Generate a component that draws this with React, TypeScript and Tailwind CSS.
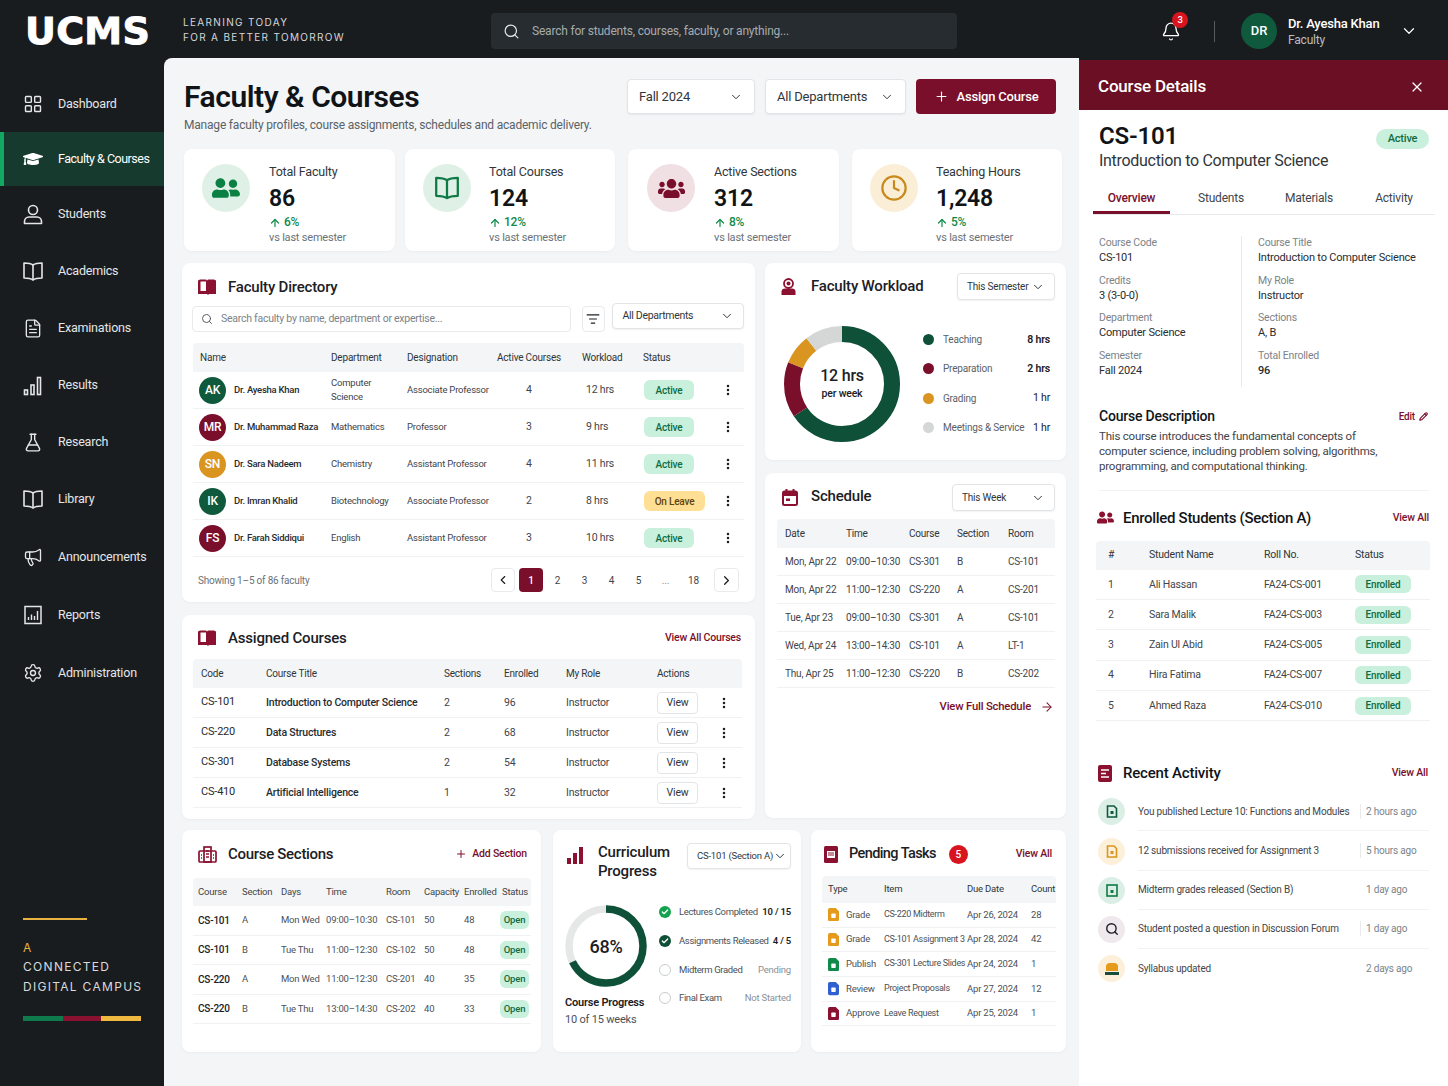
import { ArrowRight, ArrowUp, Bell, Check, ChevronDown, ChevronLeft, ChevronRight, Clock, EllipsisVertical, FileText, FlaskConical, LayoutGrid, ListFilter, Megaphone, Pencil, Plus, Search, Settings, X } from 'lucide-react';
import { FaGraduationCap, FaUserFriends, FaUsers } from 'react-icons/fa';
import type { ReactNode } from 'react';

const BarsOutline = () => (
  <svg width="20" height="20" viewBox="0 0 20 20" fill="none" stroke="currentColor" strokeWidth="1.6">
    <rect x="1.5" y="14" width="3" height="4.5" />
    <rect x="8" y="9" width="3" height="9.5" />
    <rect x="14.5" y="1.5" width="3" height="17" />
  </svg>
);

const ReportIcon = () => (
  <svg width="20" height="20" viewBox="0 0 20 20" fill="none" stroke="currentColor" strokeWidth="1.5">
    <rect x="2" y="1.5" width="16" height="17" />
    <path d="M6 15v-3M9 15V9.5M12 15v-4M15 15V6" strokeWidth="1.4" transform="translate(-.5 0)" />
  </svg>
);

const BookOutline = ({ size = 21, width = 1.6 }: { size?: number; width?: number }) => (
  <svg width={size} height={size} viewBox="0 0 20 20" fill="none" stroke="currentColor" strokeWidth={width} strokeLinejoin="round">
    <path d="M10 3.500C8 2 5 1.500 1 1.500V16.500C5 16.500 8 17 10 18.500C12 17 15 16.500 19 16.500V1.500C15 1.500 12 2 10 3.500Z" />
    <path d="M10 3.500V18.500" />
  </svg>
);

const StudentIcon = () => (
  <svg width="20" height="21" viewBox="0 0 20 21" fill="none" stroke="currentColor" strokeWidth="1.6" strokeLinejoin="round">
    <circle cx="10" cy="6" r="4.500" />
    <path d="M1.500 19.500V17.500C1.500 15 3.500 13 6 13H14C16.500 13 18.500 15 18.500 17.500V19.500Z" />
  </svg>
);

const navItems = [
  { label: 'Dashboard', icon: <LayoutGrid size={22} strokeWidth={1.7} />, h: 'h-[56px]' },
  { label: 'Faculty & Courses', icon: <FaGraduationCap size={22} />, h: 'h-[54px]', active: true },
  { label: 'Students', icon: <StudentIcon />, h: 'h-[57px]' },
  { label: 'Academics', icon: <BookOutline />, h: 'h-[57px]' },
  { label: 'Examinations', icon: <FileText size={21} strokeWidth={1.6} />, h: 'h-[57px]' },
  { label: 'Results', icon: <BarsOutline />, h: 'h-[57px]' },
  { label: 'Research', icon: <FlaskConical size={21} strokeWidth={1.7} />, h: 'h-[57px]' },
  { label: 'Library', icon: <BookOutline />, h: 'h-[57px]' },
  { label: 'Announcements', icon: <Megaphone size={22} strokeWidth={1.6} />, h: 'h-[58px]' },
  { label: 'Reports', icon: <ReportIcon />, h: 'h-[58px]' },
  { label: 'Administration', icon: <Settings size={22} strokeWidth={1.6} />, h: 'h-[58px]' },
];

const stats = [
  { label: 'Total Faculty', value: '86', delta: '6%', box: 'w-[211px] pl-[18px] gap-[19px]', bg: 'bg-[#dff1e7]', icon: <FaUserFriends size={28} className="text-[#0b8043]" /> },
  { label: 'Total Courses', value: '124', delta: '12%', box: 'w-[210px] pl-[18px] gap-[18px]', bg: 'bg-[#dff1e7]', icon: <span className="text-[#0f7a45]"><BookOutline size={24} width={1.9} /></span> },
  { label: 'Active Sections', value: '312', delta: '8%', box: 'w-[211px] pl-[19px] gap-[19px]', bg: 'bg-[#f0dfe3]', icon: <FaUsers size={27} className="text-[#7a0f2b]" /> },
  { label: 'Teaching Hours', value: '1,248', delta: '5%', box: 'w-[210px] pl-[18px] gap-[18px]', bg: 'bg-[#fbeed6]', icon: <Clock size={28} strokeWidth={1.9} className="text-[#c98a1b]" /> },
];

const faculty = [
  { initials: 'AK', color: 'bg-[#0f5a3c]', name: 'Dr. Ayesha Khan', dept: 'Computer Science', title: 'Associate Professor', courses: 4, load: '12 hrs', status: 'Active' },
  { initials: 'MR', color: 'bg-[#7a0f2b]', name: 'Dr. Muhammad Raza', dept: 'Mathematics', title: 'Professor', courses: 3, load: '9 hrs', status: 'Active' },
  { initials: 'SN', color: 'bg-[#d9951f]', name: 'Dr. Sara Nadeem', dept: 'Chemistry', title: 'Assistant Professor', courses: 4, load: '11 hrs', status: 'Active' },
  { initials: 'IK', color: 'bg-[#0f5a3c]', name: 'Dr. Imran Khalid', dept: 'Biotechnology', title: 'Associate Professor', courses: 2, load: '8 hrs', status: 'On Leave' },
  { initials: 'FS', color: 'bg-[#7a0f2b]', name: 'Dr. Farah Siddiqui', dept: 'English', title: 'Assistant Professor', courses: 3, load: '10 hrs', status: 'Active' },
];

const assigned = [
  ['CS-101', 'Introduction to Computer Science', '2', '96'],
  ['CS-220', 'Data Structures', '2', '68'],
  ['CS-301', 'Database Systems', '2', '54'],
  ['CS-410', 'Artificial Intelligence', '1', '32'],
];

const schedule = [
  ['Mon, Apr 22', '09:00–10:30', 'CS-301', 'B', 'CS-101'],
  ['Mon, Apr 22', '11:00–12:30', 'CS-220', 'A', 'CS-201'],
  ['Tue, Apr 23', '09:00–10:30', 'CS-301', 'A', 'CS-101'],
  ['Wed, Apr 24', '13:00–14:30', 'CS-101', 'A', 'LT-1'],
  ['Thu, Apr 25', '11:00–12:30', 'CS-220', 'B', 'CS-202'],
];

const sections = [
  ['CS-101', 'A', 'Mon Wed', '09:00–10:30', 'CS-101', '50', '48'],
  ['CS-101', 'B', 'Tue Thu', '11:00–12:30', 'CS-102', '50', '48'],
  ['CS-220', 'A', 'Mon Wed', '11:00–12:30', 'CS-201', '40', '35'],
  ['CS-220', 'B', 'Tue Thu', '13:00–14:30', 'CS-202', '40', '33'],
];

const tasks = [
  { type: 'Grade', item: 'CS-220 Midterm', due: 'Apr 26, 2024', count: '28', color: '#e59a1c' },
  { type: 'Grade', item: 'CS-101 Assignment 3', due: 'Apr 28, 2024', count: '42', color: '#e59a1c' },
  { type: 'Publish', item: 'CS-301 Lecture Slides', due: 'Apr 24, 2024', count: '1', color: '#0f8a4b' },
  { type: 'Review', item: 'Project Proposals', due: 'Apr 27, 2024', count: '12', color: '#2f5fd0' },
  { type: 'Approve', item: 'Leave Request', due: 'Apr 25, 2024', count: '1', color: '#8a1230' },
];

const students = [
  ['1', 'Ali Hassan', 'FA24-CS-001'],
  ['2', 'Sara Malik', 'FA24-CS-003'],
  ['3', 'Zain Ul Abid', 'FA24-CS-005'],
  ['4', 'Hira Fatima', 'FA24-CS-007'],
  ['5', 'Ahmed Raza', 'FA24-CS-010'],
];

const activity = [
  { text: 'You published Lecture 10: Functions and Modules', time: '2 hours ago', bg: 'bg-[#dcefe6]', icon: <DocOutline color="#0f5a3c" />, rule: true },
  { text: '12 submissions received for Assignment 3', time: '5 hours ago', bg: 'bg-[#fdf0da]', icon: <DocOutline color="#d9951f" />, rule: true },
  { text: 'Midterm grades released (Section B)', time: '1 day ago', bg: 'bg-[#dcefe6]', icon: <DocOutline color="#0f7a45" square />, rule: false },
  { text: 'Student posted a question in Discussion Forum', time: '1 day ago', bg: 'bg-[#efe8ec]', icon: <Search size={14} strokeWidth={2.4} className="text-[#1c2024]" />, rule: true },
  { text: 'Syllabus updated', time: '2 days ago', bg: 'bg-[#fdf0da]', icon: <SyllabusIcon />, rule: false },
];

function DocOutline({ color, square }: { color: string; square?: boolean }) {
  return (
    <svg width="12" height="13" viewBox="0 0 12 13" fill="none" stroke={color} strokeWidth="1.6">
      {square ? <rect x="1" y="1" width="10" height="11" /> : <path d="M1.5 1H8l2.500 2.500V12h-9z" />}
      <rect x="4.5" y="6" width="3" height="3" fill={color} strokeWidth="0" />
    </svg>
  );
}

function SyllabusIcon() {
  return (
    <svg width="14" height="12" viewBox="0 0 14 12">
      <path d="M1 8V3.500C1 1.500 2.500 0 4.500 0h5C11.500 0 13 1.500 13 3.500V8z" fill="#e59a1c" />
      <rect x="0" y="9" width="14" height="3" fill="#174d3a" />
    </svg>
  );
}

const DocIcon = ({ color, size = 12 }: { color: string; size?: number }) => (
  <svg width={size} height={size * 1.2} viewBox="0 0 10 12">
    <path d="M1.5 0H7l3 3v7.500A1.500 1.500 0 0 1 8.500 12h-7A1.500 1.500 0 0 1 0 10.500v-9A1.500 1.500 0 0 1 1.500 0z" fill={color} />
    <rect x="3" y="5" width="4" height="4" rx="0.6" fill="#fff" />
  </svg>
);

const BookSolid = () => (
  <svg width="18" height="16" viewBox="0 0 18 16">
    <path d="M0 1.500 2 .5h6l1 1 1-1h6l2 1V15h-7l-1 1-1-1H0z" fill="#8a1230" />
    <path d="M2.500 2.500H8V12H2.500z" fill="#fff" />
  </svg>
);

const Section = ({ children, className }: { children: ReactNode; className: string }) => (
  <section className={`rounded-lg bg-white shadow-[0_1px_3px_rgba(16,24,40,0.04)] ${className}`}>{children}</section>
);

const Select = ({ label, className }: { label: string; className: string }) => (
  <div className={`flex items-center justify-between whitespace-nowrap rounded border border-[#e2e5e8] bg-white text-[#30363b] shadow-[0_1px_2px_rgba(16,24,40,0.06)] ${className}`}>
    <span>{label}</span>
    <ChevronDown size={14} strokeWidth={1.7} className="shrink-0" />
  </div>
);

const Badge = ({ label, className }: { label: string; className: string }) => (
  <span className={`flex items-center justify-center font-medium ${label === 'On Leave' ? 'bg-[#ffdf94] text-[#5f430d]' : 'bg-[#c9f0dc] text-[#0f6b43]'} ${className}`}>{label}</span>
);

const App = () => {
  return (
    <div className="flex h-[1086px] w-[1448px] flex-col overflow-hidden bg-[#191c1f] font-['Roboto','Noto_Sans',sans-serif] tracking-[-0.2px] text-[#1c2024]">
      <header className="flex h-[58px] shrink-0 items-center pt-[4px] text-white">
        <div className="w-[183px] pl-[25px] font-['DejaVu_Sans',sans-serif] text-[38px] font-bold leading-none tracking-[0.3px] [-webkit-text-stroke:1px_white]">UCMS</div>
        <div className="mb-[2px] w-[308px] font-['Inter',sans-serif] text-[10px] leading-[15px] tracking-[1.33px] text-[#d4d7d9]">
          <div>LEARNING TODAY</div>
          <div>FOR A BETTER TOMORROW</div>
        </div>
        <div className="flex h-[36px] w-[466px] items-center gap-[12px] rounded bg-[#272c30] pl-[12px] text-[12px] text-[#a6abae]">
          <Search size={17} strokeWidth={1.7} className="text-[#e6e8e9]" />
          <span>Search for students, courses, faculty, or anything...</span>
        </div>
        <div className="relative ml-[204px] flex h-[36px] w-[20px] items-center">
          <Bell size={21} strokeWidth={1.6} />
          <span className="absolute -top-[1px] left-[11px] flex h-[16px] w-[16px] items-center justify-center rounded-full bg-[#d8151f] text-[9.5px] font-medium">3</span>
        </div>
        <div className="ml-[33px] h-[21px] w-px bg-[#565b5f]" />
        <div className="ml-[26px] flex h-[36px] w-[36px] items-center justify-center rounded-full bg-[#0f5a3c] text-[13px] font-medium">DR</div>
        <div className="ml-[11px] mt-[1px] w-[112px] leading-[17px]">
          <div className="text-[13px] font-medium">Dr. Ayesha Khan</div>
          <div className="text-[12px] text-[#b9bdc0]">Faculty</div>
        </div>
        <ChevronDown size={18} strokeWidth={1.6} />
      </header>

      <div className="flex min-h-0 flex-1">
        <aside className="flex w-[164px] shrink-0 flex-col pt-[18px] text-white">
          <nav>
            {navItems.map((item) => (
              <div key={item.label} className={`flex items-center gap-[15px] text-[12.5px] ${item.h} ${item.active ? 'border-l-[4px] border-[#12a862] bg-[#173a2e] pl-[19px] tracking-[-0.5px]' : 'pl-[23px] text-[#e4e6e7]'}`}>
                <span className="flex w-[20px] items-center justify-center">{item.icon}</span>
                <span>{item.label}</span>
              </div>
            ))}
          </nav>
          <div className="mt-auto pb-[65px] pl-[23px]">
            <div className="h-[2px] w-[64px] bg-[#e8b23e]" />
            <div className="mt-[18px] font-['Inter',sans-serif] text-[12px] leading-[19.5px] tracking-[1.3px] text-[#d8dadb]">
              <div className="text-[#e8b23e]">A</div>
              <div>CONNECTED</div>
              <div>DIGITAL CAMPUS</div>
            </div>
            <div className="mt-[20px] flex h-[5px] w-[118px]">
              <div className="w-[40px] bg-[#0f7a4c]" />
              <div className="w-[38px] bg-[#8a1230]" />
              <div className="w-[40px] bg-[#efb93f]" />
            </div>
          </div>
        </aside>

        <main className="w-[915px] shrink-0 rounded-tl-lg bg-[#f3f5f7] pl-[18px] pt-[21px]">
          <div className="flex h-[70px] pl-[2px]">
            <div className="w-[443px]">
              <h1 className="whitespace-nowrap text-[30px] font-semibold leading-[36px] tracking-[-0.45px] text-[#111417]">Faculty &amp; Courses</h1>
              <p className="mt-[2px] whitespace-nowrap text-[12px] leading-[16px] text-[#5b6268]">Manage faculty profiles, course assignments, schedules and academic delivery.</p>
            </div>
            <Select label="Fall 2024" className="h-[35px] w-[128px] px-[11px] text-[13px]" />
            <Select label="All Departments" className="ml-[10px] h-[35px] w-[141px] px-[11px] text-[13px]" />
            <button className="ml-[10px] flex h-[35px] w-[140px] items-center justify-center gap-[8px] rounded bg-[#7a0f2b] text-[13px] font-medium text-white">
              <Plus size={15} strokeWidth={1.8} />
              Assign Course
            </button>
          </div>

          <div className="ml-[2px] grid w-[878px] grid-cols-[221px_223px_224px_210px]">
            {stats.map((s) => (
              <Section key={s.label} className={`flex h-[102px] pt-[15px] ${s.box}`}>
                <div className={`flex h-[48px] w-[48px] items-center justify-center rounded-full ${s.bg}`}>{s.icon}</div>
                <div>
                  <div className="text-[12.5px] leading-[16px] text-[#30363b]">{s.label}</div>
                  <div className="mt-[4px] text-[23px] font-semibold leading-[29px] text-[#111417]">{s.value}</div>
                  <div className="mt-[2px] flex items-center gap-[3px] text-[12px] font-medium leading-[15px] text-[#0d8a4a]">
                    <ArrowUp size={12} strokeWidth={2.4} />
                    {s.delta}
                  </div>
                  <div className="mt-[1px] text-[11px] leading-[14px] text-[#6b7277]">vs last semester</div>
                </div>
              </Section>
            ))}
          </div>

          <div className="mt-[12px] grid w-[884px] grid-cols-[573px_301px] gap-[10px]">
            <div className="flex flex-col gap-[13px]">
              <Section className="h-[339px] px-[11px] pt-[12px]">
                <div className="flex h-[24px] items-center gap-[12px] pl-[5px]">
                  <BookSolid />
                  <h2 className="text-[15px] font-medium">Faculty Directory</h2>
                </div>
                <div className="mt-[4px] flex h-[29px] items-start">
                  <div className="mt-[3px] flex h-[26px] w-[380px] -translate-x-px items-center gap-[8px] rounded border border-[#e8eaec] pl-[8px] text-[10.5px] tracking-[-0.25px] text-[#7c8388]">
                    <Search size={12} strokeWidth={1.7} className="text-[#3f454a]" />
                    Search faculty by name, department or expertise...
                  </div>
                  <div className="ml-[10px] mt-[3px] flex h-[26px] w-[24px] items-center justify-center rounded border border-[#e8eaec]">
                    <ListFilter size={14} strokeWidth={2} />
                  </div>
                  <Select label="All Departments" className="ml-[7px] h-[26px] w-[132px] px-[9px] text-[10.5px] tracking-[-0.3px]" />
                </div>
                <div className="mt-[11px] grid h-[29px] grid-cols-[138px_76px_90px_85px_61px_70px_31px] items-center rounded-t bg-[#f3f5f6] text-[10px] text-[#30363b]">
                  <span className="pl-[7px]">Name</span>
                  <span>Department</span>
                  <span>Designation</span>
                  <span>Active Courses</span>
                  <span>Workload</span>
                  <span>Status</span>
                </div>
                {faculty.map((f) => (
                  <div key={f.initials} className="grid h-[37px] grid-cols-[138px_76px_90px_85px_61px_70px_31px] items-center border-b border-[#eff1f2] text-[9.5px] text-[#3f454a]">
                    <div className="flex items-center gap-[8px] pl-[6px]">
                      <span className={`flex h-[27px] w-[27px] shrink-0 items-center justify-center rounded-full text-[12px] font-medium text-white ${f.color}`}>{f.initials}</span>
                      <span className="whitespace-nowrap font-medium tracking-[-0.25px] text-[#272c30]">{f.name}</span>
                    </div>
                    <span className="pr-[12px] leading-[14px]">{f.dept}</span>
                    <span className="whitespace-nowrap">{f.title}</span>
                    <span className="pl-[29px] text-[10.5px]">{f.courses}</span>
                    <span className="pl-[4px] text-[10.5px]">{f.load}</span>
                    <Badge label={f.status} className={`h-[20px] rounded-md text-[10px] ${f.status === 'Active' ? 'ml-px w-[50px]' : 'ml-px w-[61px]'}`} />
                    <EllipsisVertical size={14} strokeWidth={2.4} className="ml-[8px] text-[#1c2024]" />
                  </div>
                ))}
                <div className="mt-[11px] flex h-[24px] items-center pl-[5px] text-[10px]">
                  <span className="w-[293px] text-[#6b7277]">Showing 1–5 of 86 faculty</span>
                  <span className="flex h-[24px] w-[24px] items-center justify-center rounded border border-[#e8eaec]"><ChevronLeft size={14} /></span>
                  <span className="ml-[4px] flex h-[24px] w-[24px] items-center justify-center rounded bg-[#7a0f2b] font-medium text-white">1</span>
                  <div className="ml-[1px] flex items-center text-center text-[#3f454a]">
                    <span className="w-[27px]">2</span>
                    <span className="w-[27px]">3</span>
                    <span className="w-[27px]">4</span>
                    <span className="w-[27px]">5</span>
                    <span className="w-[27px] text-[#8a9095]">...</span>
                    <span className="w-[29px]">18</span>
                  </div>
                  <span className="ml-[6px] flex h-[24px] w-[25px] items-center justify-center rounded border border-[#e8eaec]"><ChevronRight size={15} strokeWidth={2} /></span>
                </div>
              </Section>

              <Section className="h-[204px] px-[11px] pt-[11px]">
                <div className="flex h-[24px] items-center gap-[12px] pl-[5px]">
                  <BookSolid />
                  <h2 className="flex-1 text-[15px] font-medium">Assigned Courses</h2>
                  <span className="pr-[3px] text-[10.5px] font-medium text-[#7a0f2b]">View All Courses</span>
                </div>
                <div className="mt-[9px] grid h-[29px] w-[549px] grid-cols-[73px_178px_60px_62px_91px_56px_29px] items-center rounded-t bg-[#f3f5f6] text-[10px] text-[#30363b]">
                  <span className="pl-[8px]">Code</span>
                  <span>Course Title</span>
                  <span>Sections</span>
                  <span>Enrolled</span>
                  <span>My Role</span>
                  <span>Actions</span>
                </div>
                {assigned.map((c) => (
                  <div key={c[0]} className="grid h-[30px] w-[549px] grid-cols-[73px_178px_60px_62px_91px_56px_29px] items-center border-b border-[#eff1f2] text-[10.5px] text-[#3f454a]">
                    <span className="pl-[8px] text-[11px] text-[#272c30]">{c[0]}</span>
                    <span className="whitespace-nowrap font-medium text-[#272c30]">{c[1]}</span>
                    <span>{c[2]}</span>
                    <span>{c[3]}</span>
                    <span>Instructor</span>
                    <span className="flex h-[22px] w-[41px] items-center justify-center rounded border border-[#e2e5e8] text-[#30363b]">View</span>
                    <EllipsisVertical size={14} strokeWidth={2.4} className="ml-[4px] text-[#1c2024]" />
                  </div>
                ))}
              </Section>
            </div>

            <div className="flex flex-col gap-[13px]">
              <Section className="h-[197px] pt-[10px]">
                <div className="flex h-[27px] items-center pl-[16px] pr-[11px]">
                  <svg width="15" height="18" viewBox="0 0 15 18" fill="none" className="mr-[15px]">
                    <circle cx="7.5" cy="5.5" r="4.5" stroke="#8a1230" strokeWidth="1.8" />
                    <circle cx="7.5" cy="5.5" r="2" fill="#8a1230" />
                    <path d="M0.5 17v-3.500C.5 11.500 2 10.500 4 10.500h7c2 0 3.500 1 3.500 3V17z" fill="#8a1230" />
                  </svg>
                  <h2 className="flex-1 text-[15px] font-medium">Faculty Workload</h2>
                  <Select label="This Semester" className="h-[27px] w-[98px] px-[9px] text-[10px]" />
                </div>
                <div className="mt-[25px] flex items-center pl-[19px]">
                  <div className="relative h-[116px] w-[116px]">
                    <svg width="116" height="116" viewBox="0 0 116 116" className="-rotate-90" fill="none" strokeWidth="16">
                      <circle cx="58" cy="58" r="50" pathLength="100" stroke="#0f5138" strokeDasharray="65.6 100" />
                      <circle cx="58" cy="58" r="50" pathLength="100" stroke="#7a0f2b" strokeDasharray="15.5 100" strokeDashoffset="-65.6" />
                      <circle cx="58" cy="58" r="50" pathLength="100" stroke="#d9951f" strokeDasharray="8.4 100" strokeDashoffset="-81.1" />
                      <circle cx="58" cy="58" r="50" pathLength="100" stroke="#d5d6d6" strokeDasharray="10.5 100" strokeDashoffset="-89.5" />
                    </svg>
                    <div className="absolute inset-0 flex flex-col items-center justify-center text-[#1c2024]">
                      <span className="text-[16px] font-medium leading-[20px]">12 hrs</span>
                      <span className="text-[10.5px] font-medium leading-[16px]">per week</span>
                    </div>
                  </div>
                  <div className="ml-[23px] w-[127px] text-[10px]">
                    {[
                      ['Teaching', '8 hrs', 'bg-[#0f5138]', 'font-semibold'],
                      ['Preparation', '2 hrs', 'bg-[#7a0f2b]', 'font-semibold'],
                      ['Grading', '1 hr', 'bg-[#d9951f]', ''],
                      ['Meetings & Service', '1 hr', 'bg-[#d5d6d6]', ''],
                    ].map((l) => (
                      <div key={l[0]} className="flex h-[29.3px] items-center">
                        <span className={`h-[11px] w-[11px] rounded-full ${l[2]}`} />
                        <span className="ml-[9px] flex-1 whitespace-nowrap text-[#5b6268]">{l[0]}</span>
                        <span className={`text-[10.5px] text-[#1c2024] ${l[3]}`}>{l[1]}</span>
                      </div>
                    ))}
                  </div>
                </div>
              </Section>

              <Section className="h-[345px] pl-[12px] pr-[11px] pt-[11px]">
                <div className="flex h-[27px] items-center pl-[5px]">
                  <svg width="16" height="17" viewBox="0 0 16 17" className="mr-[13px]" fill="none">
                    <rect x="1" y="2.5" width="14" height="13.5" rx="1.5" stroke="#8a1230" strokeWidth="2" />
                    <path d="M1 3h14v4H1z" fill="#8a1230" />
                    <path d="M4.500 0v3M11.500 0v3" stroke="#8a1230" strokeWidth="2" />
                    <rect x="4" y="9.5" width="4" height="2.5" fill="#8a1230" />
                  </svg>
                  <h2 className="-mt-[2px] flex-1 text-[15px] font-medium">Schedule</h2>
                  <Select label="This Week" className="h-[27px] w-[103px] px-[9px] text-[10px]" />
                </div>
                <div className="mt-[8px] grid h-[29px] grid-cols-[69px_63px_48px_51px_47px] items-center rounded-t bg-[#f3f5f6] text-[10px] text-[#30363b]">
                  <span className="pl-[8px]">Date</span>
                  <span>Time</span>
                  <span>Course</span>
                  <span>Section</span>
                  <span>Room</span>
                </div>
                {schedule.map((r) => (
                  <div key={r[0] + r[1]} className="grid h-[28px] grid-cols-[69px_63px_48px_51px_47px] items-center whitespace-nowrap border-b border-[#eff1f2] text-[10px] text-[#3f454a]">
                    <span className="pl-[8px]">{r[0]}</span>
                    <span>{r[1]}</span>
                    <span>{r[2]}</span>
                    <span>{r[3]}</span>
                    <span>{r[4]}</span>
                  </div>
                ))}
                <div className="mt-[9px] flex h-[20px] items-center justify-end gap-[9px] pr-[1px] text-[11.3px] font-medium text-[#7a0f2b]">
                  View Full Schedule
                  <ArrowRight size={14} strokeWidth={1.8} />
                </div>
              </Section>
            </div>
          </div>

          <div className="mt-[11px] grid w-[884px] grid-cols-[371px_258px_255px]">
            <Section className="h-[222px] w-[359px] px-[11px] pt-[12px]">
              <div className="flex h-[24px] items-center pl-[5px]">
                <svg width="19" height="17" viewBox="0 0 19 17" fill="none" stroke="#8a1230" strokeWidth="1.7" className="mr-[11px]">
                  <rect x="1" y="5" width="17" height="11" rx="1" />
                  <rect x="6" y="1" width="7" height="15" />
                  <path d="M8 5h3M8 8h3M8 11h3M3 9h1M15 9h1M3 12h1M15 12h1" />
                </svg>
                <h2 className="flex-1 text-[15px] font-medium tracking-[-0.3px]">Course Sections</h2>
                <span className="flex items-center gap-[5px] pr-[3px] text-[10.5px] font-medium text-[#7a0f2b]"><Plus size={12} strokeWidth={2} />Add Section</span>
              </div>
              <div className="mt-[12px] grid h-[28px] w-[338px] grid-cols-[49px_39px_45px_60px_38px_40px_38px_29px] items-center whitespace-nowrap rounded-t bg-[#f3f5f6] text-[9.5px] text-[#3f454a]">
                <span className="pl-[5px]">Course</span>
                <span>Section</span>
                <span>Days</span>
                <span>Time</span>
                <span>Room</span>
                <span>Capacity</span>
                <span>Enrolled</span>
                <span>Status</span>
              </div>
              {sections.map((r) => (
                <div key={r[0] + r[1]} className="grid h-[29.5px] w-[338px] grid-cols-[49px_39px_45px_60px_38px_40px_38px_29px] items-center whitespace-nowrap border-b border-[#eff1f2] text-[9.5px] text-[#4b5157]">
                  <span className="pl-[5px] text-[10px] font-medium text-[#1c2024]">{r[0]}</span>
                  <span>{r[1]}</span>
                  <span>{r[2]}</span>
                  <span>{r[3]}</span>
                  <span>{r[4]}</span>
                  <span>{r[5]}</span>
                  <span>{r[6]}</span>
                  <Badge label="Open" className="-ml-[2px] h-[18px] w-[29px] rounded-md text-[9.5px]" />
                </div>
              ))}
            </Section>

            <Section className="h-[222px] w-[248px] pl-[12px] pt-[13px]">
              <div className="flex h-[38px] items-start pl-[2px]">
                <svg width="16" height="17" viewBox="0 0 16 17" className="mr-[15px] mt-[4px]" fill="#8a1230">
                  <rect x="0" y="11" width="4" height="6" />
                  <rect x="6" y="6" width="4" height="11" />
                  <rect x="12" y="0" width="4" height="17" />
                </svg>
                <h2 className="w-[89px] text-[15px] font-medium leading-[19px]">Curriculum Progress</h2>
                <Select label="CS-101 (Section A)" className="h-[26px] w-[104px] pl-[9px] pr-[5px] text-[9.5px]" />
              </div>
              <div className="mt-[17px] flex">
                <div className="w-[94px] pt-[7px]">
                  <div className="relative h-[82px] w-[82px]">
                    <svg width="82" height="82" viewBox="0 0 82 82" className="-rotate-90" fill="none" strokeWidth="7.5">
                      <circle cx="41" cy="41" r="37" stroke="#e6e8e8" />
                      <circle cx="41" cy="41" r="37" pathLength="100" stroke="#0f5138" strokeDasharray="68 100" />
                    </svg>
                    <span className="absolute inset-0 flex items-center justify-center text-[18px] font-medium text-[#1c2024]">68%</span>
                  </div>
                  <div className="mt-[8px] whitespace-nowrap text-[11px] font-semibold leading-[16px]">Course Progress</div>
                  <div className="mt-[1px] whitespace-nowrap text-[11px] leading-[16px] text-[#4b5157]">10 of 15 weeks</div>
                </div>
                <div className="w-[132px] whitespace-nowrap text-[9.5px]">
                  {[
                    ['Lectures Completed', '10 / 15', 'done'],
                    ['Assignments Released', '4 / 5', 'dark'],
                    ['Midterm Graded', 'Pending', ''],
                    ['Final Exam', 'Not Started', ''],
                  ].map((r) => (
                    <div key={r[0]} className="flex h-[28.7px] items-center">
                      {r[2] ? (
                        <span className={`flex h-[12px] w-[12px] items-center justify-center rounded-full text-white ${r[2] === 'done' ? 'bg-[#12a24f]' : 'bg-[#0f4f38]'}`}><Check size={8} strokeWidth={4} /></span>
                      ) : (
                        <span className="h-[12px] w-[12px] rounded-full border border-[#c9cdd0]" />
                      )}
                      <span className="ml-[8px] flex-1 tracking-[-0.35px] text-[#4b5157]">{r[0]}</span>
                      <span className={r[2] ? 'font-semibold text-[#1c2024]' : 'text-[#8a9095]'}>{r[1]}</span>
                    </div>
                  ))}
                </div>
              </div>
            </Section>

            <Section className="h-[222px] pl-[11px] pr-[10px] pt-[12px]">
              <div className="flex h-[24px] items-center pl-[2px]">
                <svg width="14" height="17" viewBox="0 0 14 17" className="mr-[11px]">
                  <rect width="14" height="17" rx="1.5" fill="#8a1230" />
                  <rect x="3" y="5" width="8" height="7" fill="#fff" />
                  <path d="M4 7h6M4 9h6" stroke="#8a1230" />
                </svg>
                <h2 className="text-[14.5px] font-medium tracking-[-0.6px]">Pending Tasks</h2>
                <span className="ml-[13px] flex h-[19px] w-[19px] items-center justify-center rounded-full bg-[#d8151f] text-[10px] font-medium text-white">5</span>
                <span className="ml-auto pr-[4px] text-[10.5px] font-medium text-[#7a0f2b]">View All</span>
              </div>
              <div className="mt-[10px] grid h-[27px] grid-cols-[62px_83px_64px_25px] items-center whitespace-nowrap rounded-t bg-[#f3f5f6] text-[9.5px] text-[#30363b]">
                <span className="pl-[6px]">Type</span>
                <span>Item</span>
                <span>Due Date</span>
                <span>Count</span>
              </div>
              {tasks.map((t) => (
                <div key={t.item} className="grid h-[24.7px] grid-cols-[62px_83px_64px_25px] items-center whitespace-nowrap border-b border-[#eff1f2] text-[9.5px] text-[#4b5157]">
                  <span className="flex items-center gap-[7px] pl-[6px]"><DocIcon color={t.color} size={11} />{t.type}</span>
                  <span className="text-[9px] tracking-[-0.3px]">{t.item}</span>
                  <span>{t.due}</span>
                  <span>{t.count}</span>
                </div>
              ))}
            </Section>
          </div>
        </main>

        <aside className="mt-[2px] w-[369px] shrink-0 bg-white">
          <div className="flex h-[50px] items-center justify-between bg-[#6a0f24] pl-[19px] pr-[23px] pt-[3px] text-white">
            <h2 className="text-[17px] font-medium">Course Details</h2>
            <X size={16} strokeWidth={1.8} />
          </div>
          <div className="pl-[20px] pr-[19px] pt-[12px]">
            <div className="flex justify-between">
              <div>
                <h3 className="text-[24px] font-semibold leading-[28px] text-[#111417]">CS-101</h3>
                <p className="text-[16px] leading-[22px] tracking-[-0.3px] text-[#30363b]">Introduction to Computer Science</p>
              </div>
              <Badge label="Active" className="mt-[7px] h-[20px] w-[53px] rounded-full text-[11px]" />
            </div>
            <div className="-ml-[6px] mt-[14px] grid w-[342px] grid-cols-[77px_102px_74px_89px] border-b border-[#e8eaec] text-center text-[12px] text-[#3f454a]">
              <span className="h-[28px] border-b-[3px] border-[#7a0f2b] pt-[3px] font-medium text-[#7a0f2b]">Overview</span>
              <span className="pt-[3px]">Students</span>
              <span className="pt-[3px]">Materials</span>
              <span className="pl-[7px] pt-[3px]">Activity</span>
            </div>
            <div className="mt-[21px] grid grid-cols-[143px_1fr] text-[10.5px]">
              <div className="border-r border-[#e8eaec]">
                {[
                  ['Course Code', 'CS-101'],
                  ['Credits', '3 (3-0-0)'],
                  ['Department', 'Computer Science'],
                  ['Semester', 'Fall 2024'],
                ].map((r) => (
                  <div key={r[0]} className="h-[37.7px]">
                    <div className="leading-[14px] text-[#7c8388]">{r[0]}</div>
                    <div className="text-[11px] leading-[16px] text-[#272c30]">{r[1]}</div>
                  </div>
                ))}
              </div>
              <div className="pl-[16px]">
                {[
                  ['Course Title', 'Introduction to Computer Science'],
                  ['My Role', 'Instructor'],
                  ['Sections', 'A, B'],
                  ['Total Enrolled', '96'],
                ].map((r) => (
                  <div key={r[0]} className="h-[37.7px]">
                    <div className="leading-[14px] text-[#7c8388]">{r[0]}</div>
                    <div className={`whitespace-nowrap text-[11px] leading-[16px] text-[#272c30] ${r[1] === '96' ? 'font-medium' : ''}`}>{r[1]}</div>
                  </div>
                ))}
              </div>
            </div>
            <div className="mt-[20px] flex h-[20px] items-center justify-between">
              <h3 className="text-[14px] font-medium text-[#111417]">Course Description</h3>
              <span className="flex items-center gap-[4px] pr-[1px] text-[10px] font-medium text-[#7a0f2b]">Edit <Pencil size={9} strokeWidth={3} /></span>
            </div>
            <p className="mt-[2px] w-[300px] text-[11.5px] leading-[15px] text-[#3f454a]">This course introduces the fundamental concepts of computer science, including problem solving, algorithms, programming, and computational thinking.</p>
            <div className="mt-[16px] h-px bg-[#f0f2f3]" />
            <div className="-ml-[2px] mt-[15px] flex h-[24px] items-center">
              <FaUserFriends size={17} className="mr-[9px] text-[#8a1230]" />
              <h3 className="flex-1 text-[15px] font-medium tracking-[-0.3px] text-[#111417]">Enrolled Students (Section A)</h3>
              <span className="text-[10.5px] font-medium text-[#7a0f2b]">View All</span>
            </div>
            <div className="-ml-[3px] mt-[11px] w-[334px]">
              <div className="grid h-[29px] grid-cols-[53px_115px_91px_75px] items-center rounded-t bg-[#f3f5f6] text-[10.5px] text-[#30363b]">
                <span className="pl-[12px]">#</span>
                <span>Student Name</span>
                <span>Roll No.</span>
                <span>Status</span>
              </div>
              {students.map((s) => (
                <div key={s[0]} className="grid h-[30.3px] grid-cols-[53px_115px_91px_75px] items-center border-b border-[#eff1f2] text-[10.5px] text-[#3f454a]">
                  <span className="pl-[12px]">{s[0]}</span>
                  <span>{s[1]}</span>
                  <span>{s[2]}</span>
                  <Badge label="Enrolled" className="h-[18px] w-[56px] rounded-md text-[10px]" />
                </div>
              ))}
            </div>
            <div className="-ml-px mt-[40px] flex h-[24px] items-center">
              <svg width="14" height="17" viewBox="0 0 14 17" className="mr-[11px]">
                <rect width="14" height="17" rx="2" fill="#8a1230" />
                <path d="M3 5h8M3 8.500h5M3 12h8" stroke="#fff" strokeWidth="1.4" />
              </svg>
              <h3 className="flex-1 text-[15px] font-medium text-[#111417]">Recent Activity</h3>
              <span className="pr-px text-[10.5px] font-medium text-[#7a0f2b]">View All</span>
            </div>
            <div className="-ml-px mt-[7px]">
              {activity.map((a) => (
                <div key={a.text} className="flex h-[39.2px] items-center">
                  <span className={`flex h-[27px] w-[27px] shrink-0 items-center justify-center rounded-full ${a.bg}`}>{a.icon}</span>
                  <div className={`ml-[13px] flex h-full w-[292px] items-center text-[10px] text-[#3f454a] ${a.time === '2 days ago' ? '' : 'border-b border-[#f0f2f3]'}`}>
                    <span className="w-[222px] whitespace-nowrap">{a.text}</span>
                    <span className={`pl-[5px] text-[#7c8388] ${a.rule ? 'border-l border-[#e8eaec]' : 'ml-px'}`}>{a.time}</span>
                  </div>
                </div>
              ))}
            </div>
          </div>
        </aside>
      </div>
    </div>
  );
};

export default App;
